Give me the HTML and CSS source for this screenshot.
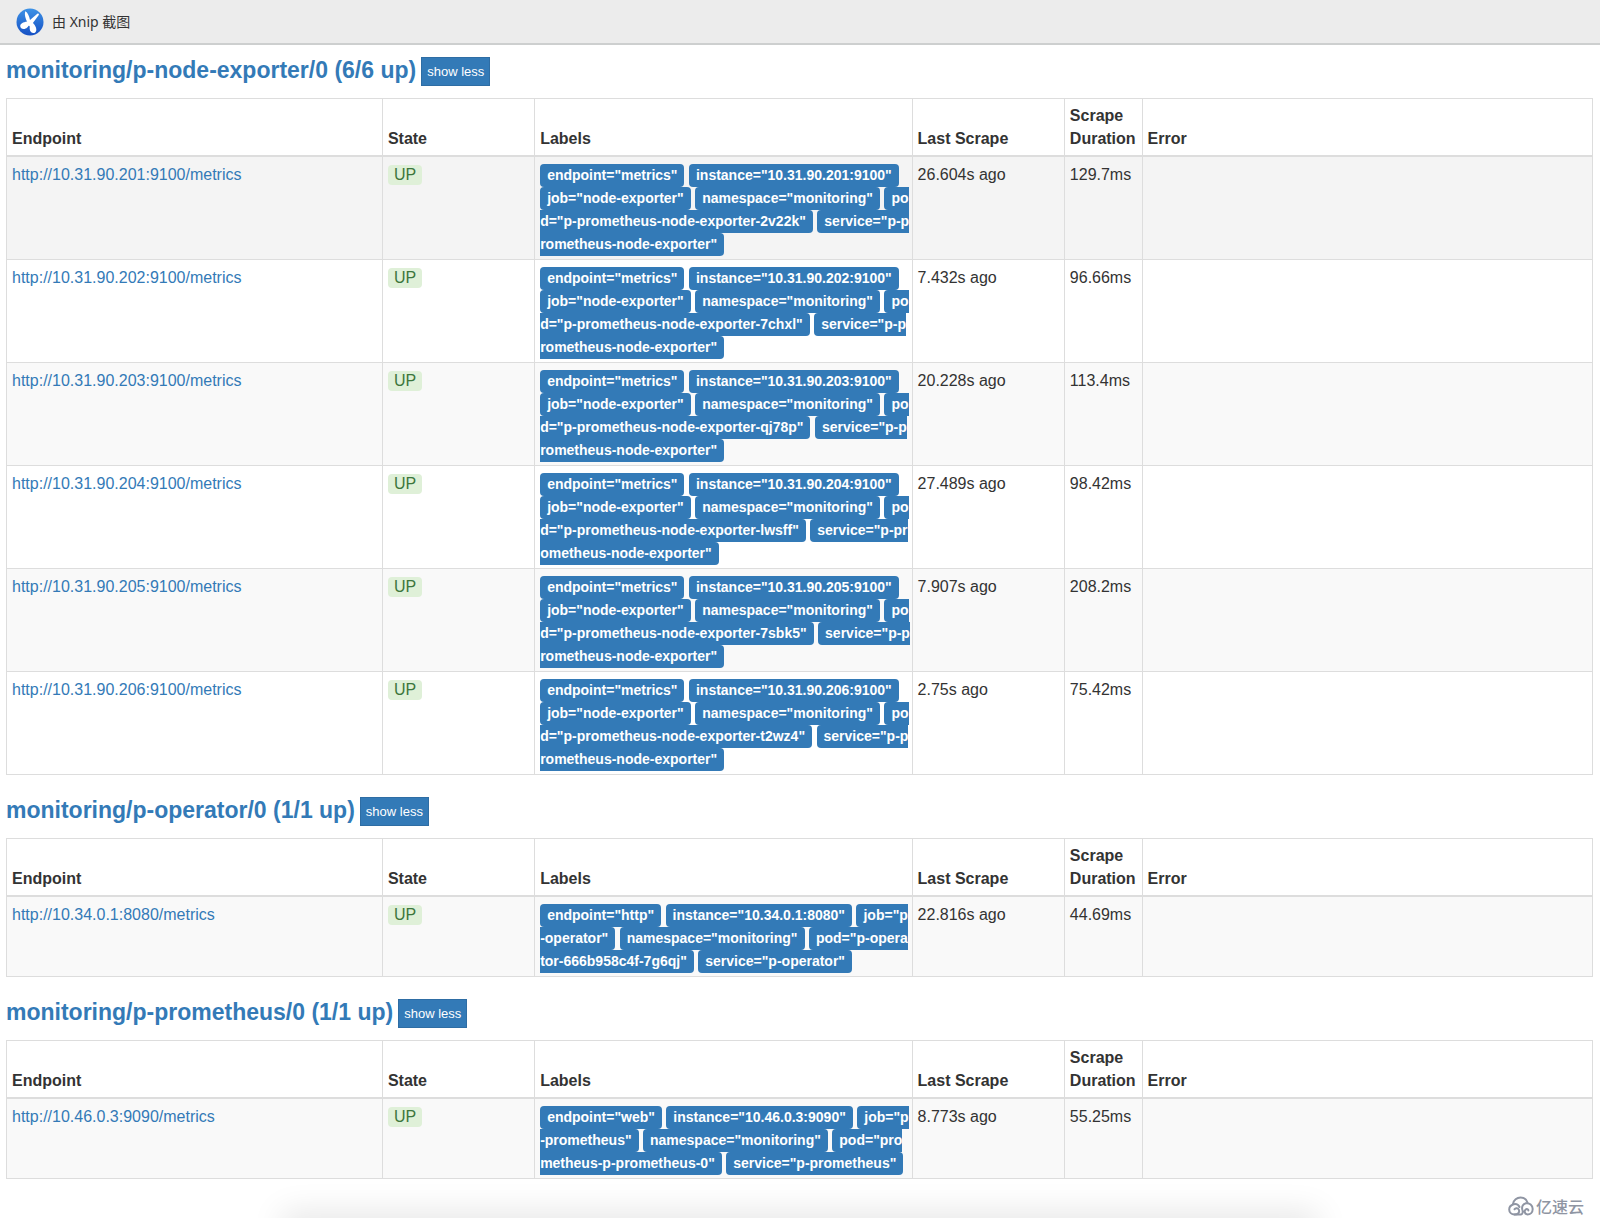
FILE: index.html
```html
<!DOCTYPE html>
<html lang="en">
<head>
<meta charset="utf-8">
<title>Targets</title>
<link rel="stylesheet" href="styles.css">
</head>
<body>
<header class="topbar">
  <svg class="topbar-icon" viewBox="0 0 28 28" aria-hidden="true">
    <defs><linearGradient id="disc" x1="0" y1="0" x2="0" y2="1"><stop offset="0" stop-color="#3d92e6"/><stop offset="1" stop-color="#1650c4"/></linearGradient></defs>
    <circle cx="14" cy="14" r="13.5" fill="url(#disc)"/>
    <path d="M9.2 3.2C11.8 4.500 13.300 8 14 12L21.300 5.700C22.700 5 23.400 6.200 22.600 7.300L16.700 15.200 13.500 18 11.500 14.500C9.500 11 8.200 6.500 9.200 3.200Z" fill="#fff"/>
    <path d="M12.300 13.500C9 13.700 4.500 14.700 4.200 18C4.300 21.500 9 21.800 11.200 19.500C12 18.700 12.500 17.700 13.300 17.500C14 18.500 13.600 19.800 13.700 21C14 24.700 17.200 26 19.200 24.500C21.800 22.300 19.800 17.500 16.500 14.500Z" fill="#fff"/>
  </svg>
  <span lang="zh">由 Xnip 截图</span>
</header>
<main class="targets">

<section class="pool">
  <div class="pool-head">
    <h2><a href="#node-exporter" id="node-exporter">monitoring/p-node-exporter/0 (6/6 up)</a></h2>
    <button type="button" class="toggle">show less</button>
  </div>
  <table>
    <colgroup><col class="c-endpoint"><col class="c-state"><col class="c-labels"><col class="c-last"><col class="c-duration"><col></colgroup>
    <thead><tr><th>Endpoint</th><th>State</th><th>Labels</th><th>Last Scrape</th><th>Scrape Duration</th><th>Error</th></tr></thead>
    <tbody>
      <tr class="hovered">
        <td><a href="http://10.31.90.201:9100/metrics">http://10.31.90.201:9100/metrics</a></td>
        <td><span class="state">UP</span></td>
        <td class="labels"><span>endpoint="metrics"</span> <span>instance="10.31.90.201:9100"</span><br><span>job="node-exporter"</span> <span>namespace="monitoring"</span> <span>po<br>d="p-prometheus-node-exporter-2v22k"</span> <span>service="p-p<br>rometheus-node-exporter"</span></td>
        <td>26.604s ago</td><td>129.7ms</td><td></td>
      </tr>
      <tr>
        <td><a href="http://10.31.90.202:9100/metrics">http://10.31.90.202:9100/metrics</a></td>
        <td><span class="state">UP</span></td>
        <td class="labels"><span>endpoint="metrics"</span> <span>instance="10.31.90.202:9100"</span><br><span>job="node-exporter"</span> <span>namespace="monitoring"</span> <span>po<br>d="p-prometheus-node-exporter-7chxl"</span> <span>service="p-p<br>rometheus-node-exporter"</span></td>
        <td>7.432s ago</td><td>96.66ms</td><td></td>
      </tr>
      <tr>
        <td><a href="http://10.31.90.203:9100/metrics">http://10.31.90.203:9100/metrics</a></td>
        <td><span class="state">UP</span></td>
        <td class="labels"><span>endpoint="metrics"</span> <span>instance="10.31.90.203:9100"</span><br><span>job="node-exporter"</span> <span>namespace="monitoring"</span> <span>po<br>d="p-prometheus-node-exporter-qj78p"</span> <span>service="p-p<br>rometheus-node-exporter"</span></td>
        <td>20.228s ago</td><td>113.4ms</td><td></td>
      </tr>
      <tr>
        <td><a href="http://10.31.90.204:9100/metrics">http://10.31.90.204:9100/metrics</a></td>
        <td><span class="state">UP</span></td>
        <td class="labels"><span>endpoint="metrics"</span> <span>instance="10.31.90.204:9100"</span><br><span>job="node-exporter"</span> <span>namespace="monitoring"</span> <span>po<br>d="p-prometheus-node-exporter-lwsff"</span> <span>service="p-pr<br>ometheus-node-exporter"</span></td>
        <td>27.489s ago</td><td>98.42ms</td><td></td>
      </tr>
      <tr>
        <td><a href="http://10.31.90.205:9100/metrics">http://10.31.90.205:9100/metrics</a></td>
        <td><span class="state">UP</span></td>
        <td class="labels"><span>endpoint="metrics"</span> <span>instance="10.31.90.205:9100"</span><br><span>job="node-exporter"</span> <span>namespace="monitoring"</span> <span>po<br>d="p-prometheus-node-exporter-7sbk5"</span> <span>service="p-p<br>rometheus-node-exporter"</span></td>
        <td>7.907s ago</td><td>208.2ms</td><td></td>
      </tr>
      <tr>
        <td><a href="http://10.31.90.206:9100/metrics">http://10.31.90.206:9100/metrics</a></td>
        <td><span class="state">UP</span></td>
        <td class="labels"><span>endpoint="metrics"</span> <span>instance="10.31.90.206:9100"</span><br><span>job="node-exporter"</span> <span>namespace="monitoring"</span> <span>po<br>d="p-prometheus-node-exporter-t2wz4"</span> <span>service="p-p<br>rometheus-node-exporter"</span></td>
        <td>2.75s ago</td><td>75.42ms</td><td></td>
      </tr>
    </tbody>
  </table>
</section>

<section class="pool">
  <div class="pool-head">
    <h2><a href="#operator" id="operator">monitoring/p-operator/0 (1/1 up)</a></h2>
    <button type="button" class="toggle">show less</button>
  </div>
  <table>
    <colgroup><col class="c-endpoint"><col class="c-state"><col class="c-labels"><col class="c-last"><col class="c-duration"><col></colgroup>
    <thead><tr><th>Endpoint</th><th>State</th><th>Labels</th><th>Last Scrape</th><th>Scrape Duration</th><th>Error</th></tr></thead>
    <tbody>
      <tr>
        <td><a href="http://10.34.0.1:8080/metrics">http://10.34.0.1:8080/metrics</a></td>
        <td><span class="state">UP</span></td>
        <td class="labels"><span>endpoint="http"</span> <span>instance="10.34.0.1:8080"</span> <span>job="p<br>-operator"</span> <span>namespace="monitoring"</span> <span>pod="p-opera<br>tor-666b958c4f-7g6qj"</span> <span>service="p-operator"</span></td>
        <td>22.816s ago</td><td>44.69ms</td><td></td>
      </tr>
    </tbody>
  </table>
</section>

<section class="pool">
  <div class="pool-head">
    <h2><a href="#prometheus" id="prometheus">monitoring/p-prometheus/0 (1/1 up)</a></h2>
    <button type="button" class="toggle">show less</button>
  </div>
  <table>
    <colgroup><col class="c-endpoint"><col class="c-state"><col class="c-labels"><col class="c-last"><col class="c-duration"><col></colgroup>
    <thead><tr><th>Endpoint</th><th>State</th><th>Labels</th><th>Last Scrape</th><th>Scrape Duration</th><th>Error</th></tr></thead>
    <tbody>
      <tr>
        <td><a href="http://10.46.0.3:9090/metrics">http://10.46.0.3:9090/metrics</a></td>
        <td><span class="state">UP</span></td>
        <td class="labels"><span>endpoint="web"</span> <span>instance="10.46.0.3:9090"</span> <span>job="p<br>-prometheus"</span> <span>namespace="monitoring"</span> <span>pod="pro<br>metheus-p-prometheus-0"</span> <span>service="p-prometheus"</span></td>
        <td>8.773s ago</td><td>55.25ms</td><td></td>
      </tr>
    </tbody>
  </table>
</section>
</main>
<footer class="foot">
  <div class="brand">
    <svg class="brand-icon" viewBox="0 0 26 20" aria-hidden="true" fill="none" stroke="#8f95a3" stroke-width="2" stroke-linecap="round">
      <path d="M5 8C5.500 4 9 1.500 12.500 1.500C16 1.500 18.500 3.500 19.500 6.500"/>
      <path d="M11.500 11C10.500 8.800 8 7.700 5.700 8.200C3 9 1.200 11 1.200 13.500C1.200 16.500 3.500 18.500 6.500 18.500C10 18.500 11.800 16.500 11 14C10.300 12 7.500 11.500 6.500 13.300"/>
      <path d="M6.500 18.500H13C15 18 15 15.500 14.300 13.500C13.500 10.500 15 8 18 7.300C21.500 6.700 24.700 9.500 24.700 13C24.700 16.300 22.300 18.500 19.500 18.500C16.500 18.300 15.800 14.500 18 13.300C19.500 12.700 20.500 13.500 20.300 14.500"/>
    </svg>
    <span lang="zh">亿速云</span>
  </div>
</footer>
</body>
</html>
```
FILE: styles.css
```css
* { box-sizing: border-box; }
body {
  margin: 0;
  min-height: 100vh;
  display: flex;
  flex-direction: column;
  background: #fff;
  color: #333;
  font: 16px/23px "Liberation Sans", Arial, "Noto Sans CJK SC", sans-serif;
}
a { color: #337ab7; text-decoration: none; }

.topbar {
  display: flex;
  align-items: center;
  gap: 8px;
  height: 45px;
  padding: 0 16px;
  background: #ececec;
  border-bottom: 2px solid #cdcfcf;
  font: 14px/20px "Noto Sans", "Noto Sans CJK SC", sans-serif;
}
.topbar-icon { width: 28px; height: 28px; }

.targets { padding: 12px 7px 0 6px; }
.pool { margin-bottom: 22px; }
.pool-head {
  display: flex;
  align-items: flex-start;
  gap: 5px;
  margin-bottom: 12px;
}
h2 { margin: 0; font-size: 23px; line-height: 26px; }
.toggle {
  height: 29px;
  padding: 0 5px;
  border: 1px solid #2e6da4;
  background: #337ab7;
  color: #fff;
  font: 13px/20px "Liberation Sans", Arial, sans-serif;
}

table {
  width: 100%;
  table-layout: fixed;
  border-collapse: collapse;
  border: 1px solid #ddd;
}
.c-endpoint { width: 23.7%; }
.c-state { width: 9.6%; }
.c-labels { width: 23.8%; }
.c-last { width: 9.6%; }
.c-duration { width: 4.9%; }
th, td { padding: 5px; border: 1px solid #ddd; text-align: left; }
th { vertical-align: bottom; border-bottom-width: 2px; }
td { padding-top: 6px; padding-bottom: 4px; vertical-align: top; }
tbody tr:nth-child(odd) { background: #f9f9f9; }
tbody tr.hovered { background: #f4f4f4; }

.state {
  padding: 1px 6px 2px;
  border-radius: 4px;
  background: #dff0d8;
  color: #3c763d;
}
.labels { white-space: nowrap; }
.labels span {
  padding: 3px 7px 4px;
  border-radius: 4px;
  background: #337ab7;
  color: #fff;
  font-size: 14px;
  font-weight: bold;
  line-height: 14px;
}

.foot {
  position: relative;
  flex: 1;
  display: flex;
  justify-content: flex-end;
  align-items: flex-end;
  padding: 0 16px 2px;
  margin-top: -22px;
  overflow: hidden;
}
.foot::before {
  content: "";
  position: absolute;
  left: 18%;
  right: 18%;
  top: 100%;
  height: 20px;
  box-shadow: 0 0 32px 6px rgba(0, 0, 0, 0.1);
}
.brand {
  display: flex;
  align-items: center;
  gap: 2px;
  color: #8f95a3;
  font: 500 16px/20px "Noto Sans CJK SC", sans-serif;
}
.brand-icon { width: 26px; height: 20px; }
```
